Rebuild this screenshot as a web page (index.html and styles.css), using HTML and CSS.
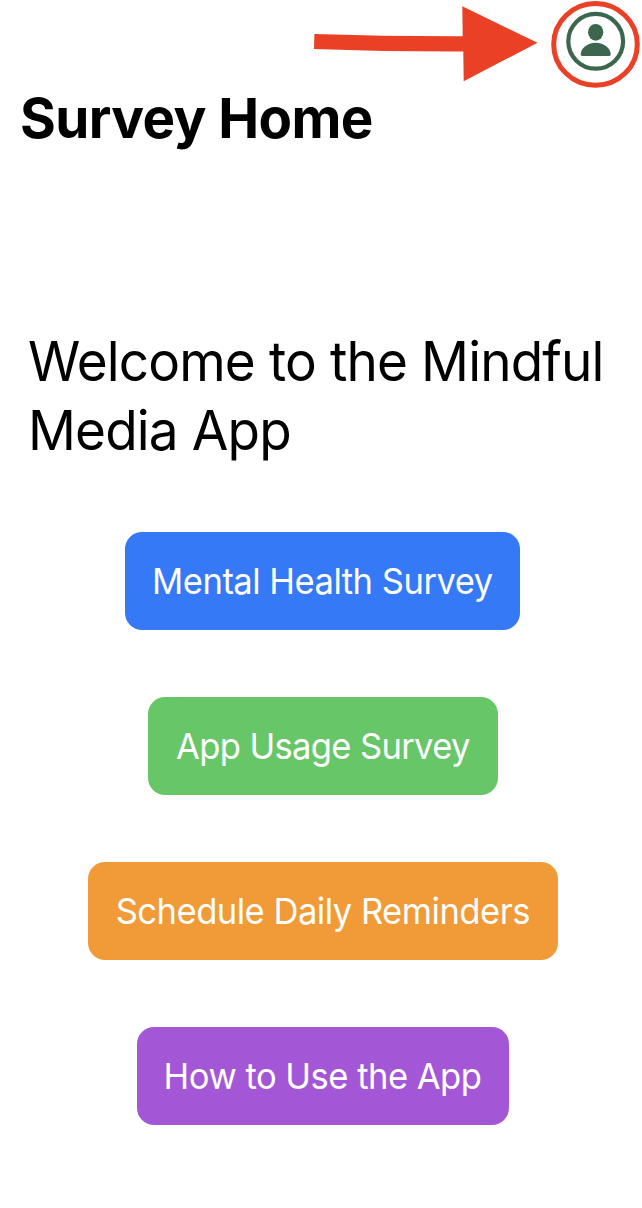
FILE: index.html
```html
<!DOCTYPE html>
<html lang="en">
<head>
<meta charset="utf-8">
<title>Survey Home</title>
<link rel="stylesheet" href="styles.css">
</head>
<body>
<main class="screen">
  <header class="toolbar">
    <svg class="toolbar-art" viewBox="0 0 642 90" role="img" aria-label="Profile">
      <path class="arrow" d="M314.400 34Q388 36.500 462.700 36.300L462.300 6.300L537.500 42.800L463.700 81.200L463.300 51.600Q388 51.800 314 49Z"/>
      <circle class="avatar-ring" cx="595.700" cy="41.300" r="27.400"/>
      <ellipse class="avatar-fill" cx="595.700" cy="32.300" rx="7.600" ry="8.400"/>
      <path class="avatar-fill" d="M582.300 56C581.200 56 580.700 55.400 580.700 54.300C580.700 48.500 587 42.700 595.700 42.700S610.700 48.500 610.700 54.300C610.700 55.400 610.200 56 609.100 56Z"/>
      <ellipse class="highlight" cx="595.500" cy="44.400" rx="41.800" ry="40.900"/>
    </svg>
  </header>
  <h1 class="title">Survey Home</h1>
  <p class="welcome">Welcome to the Mindful<br>Media App</p>
  <nav class="actions">
    <button class="action blue"><span class="label">Mental Health Survey</span></button>
    <button class="action green"><span class="label">App Usage Survey</span></button>
    <button class="action orange"><span class="label">Schedule Daily Reminders</span></button>
    <button class="action purple"><span class="label">How to Use the App</span></button>
  </nav>
</main>
</body>
</html>
```
FILE: styles.css
```css
body { margin: 0; background: #fff; color: #000; font-family: Inter, "Liberation Sans", sans-serif; }
.screen { width: 642px; height: 1208px; overflow: hidden; display: flex; flex-direction: column; }
.toolbar { height: 88px; }
.toolbar-art { display: block; width: 642px; height: 90px; }
.arrow { fill: #ea4026; }
.avatar-ring { fill: none; stroke: #3c674e; stroke-width: 4.2; }
.avatar-fill { fill: #3c674e; }
.highlight { fill: none; stroke: #ea4026; stroke-width: 5; }
.title { margin: 0 0 0 20px; font-size: 55.5px; line-height: 60px; font-weight: 700; letter-spacing: -0.6px; white-space: nowrap; transform: scaleX(0.986); transform-origin: left; }
.welcome { margin: 179px 0 0 28px; font-size: 55px; line-height: 69px; letter-spacing: -0.9px; white-space: nowrap; transform: scaleX(0.965); transform-origin: left; }
.actions { display: flex; flex-direction: column; align-items: center; gap: 67px; margin-top: 67px; padding-left: 3px; }
.action { border: 0; border-radius: 17px; height: 98px; padding: 0; color: #fff; font: 400 36px/98px Inter, "Liberation Sans", sans-serif; letter-spacing: -0.52px; white-space: nowrap; }
.label { display: inline-block; transform: scaleX(0.96); }
.blue { width: 395px; background: #3579f7; }
.green { width: 350px; background: #67c667; letter-spacing: -0.68px; }
.orange { width: 470px; background: #f19a38; }
.purple { width: 372px; background: #a357d7; }
```
